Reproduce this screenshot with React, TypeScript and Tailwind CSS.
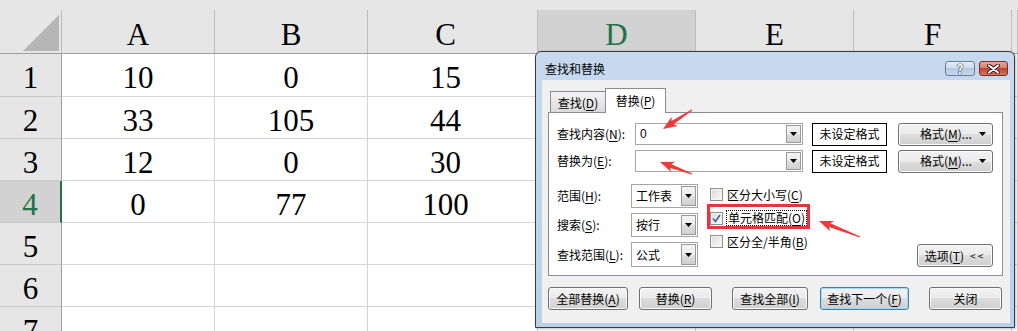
import React from "react"
import clsx from "clsx"

const colW = ["w-[153px]", "w-[153px]", "w-[170px]", "w-[158px]", "w-[158px]", "w-[158px]", "flex-1"]
const colPad = ["", "", "pr-[14px]", "", "", "", ""]
const letters = ["A", "B", "C", "D", "E", "F", ""]

const data = [
  ["10", "0", "15"],
  ["33", "105", "44"],
  ["12", "0", "30"],
  ["0", "77", "100"],
  [],
  [],
  [],
]

const cjk = "font-['Noto_Sans_CJK_SC',sans-serif]"

function Tri() {
  return (
    <svg width="7" height="4" viewBox="0 0 7 4">
      <polygon points="0,0 7,0 3.5,4" fill="#000" />
    </svg>
  )
}

function DropBtn({ className = "" }: { className?: string }) {
  return (
    <div
      className={clsx(
        "flex w-[15px] items-center justify-center border border-[#9a9a9a] bg-[linear-gradient(#f4f4f4_0%,#ececec_50%,#dedede_50%,#d0d0d0_100%)]",
        className
      )}
    >
      <Tri />
    </div>
  )
}

function Btn({
  children,
  className = "",
  focus = false,
}: {
  children: React.ReactNode
  className?: string
  focus?: boolean
}) {
  return (
    <div
      className={clsx(
        "flex h-[23px] items-center justify-center rounded-[3px] border text-[12px] leading-none text-black bg-[linear-gradient(#f2f2f2_0%,#ebebeb_50%,#dddddd_50%,#cfcfcf_100%)]",
        focus
          ? "border-[#3c7fb1] shadow-[inset_0_0_0_1px_#9fdcf8]"
          : "border-[#707070] shadow-[inset_0_0_0_1px_#fbfbfb]",
        className
      )}
    >
      {children}
    </div>
  )
}

function Key({ k }: { k: string }) {
  return <span className="underline underline-offset-2">{k}</span>
}

function Check({ checked = false }: { checked?: boolean }) {
  return (
    <div className="flex h-[13px] w-[13px] items-center justify-center border border-[#8f8f8f] bg-linear-to-br from-[#dadada] to-[#fafafa] shadow-[inset_0_0_0_1px_#f4f4f4]">
      {checked && (
        <svg width="9" height="9" viewBox="0 0 9 9">
          <path d="M1 4.5 L3.5 7.5 L8 1" stroke="#4a5f97" strokeWidth="1.6" fill="none" />
        </svg>
      )}
    </div>
  )
}

function Select({ value, className = "" }: { value: string; className?: string }) {
  return (
    <div className={clsx("flex w-[67px] border border-[#a5a5a5] bg-white p-[1px]", className)}>
      <div className="flex flex-1 items-center pl-[3px] text-[12px]">{value}</div>
      <DropBtn />
    </div>
  )
}

function Arrow({ tail, tip }: { tail: [number, number]; tip: [number, number] }) {
  const dx = tip[0] - tail[0]
  const dy = tip[1] - tail[1]
  const len = Math.hypot(dx, dy)
  const ux = dx / len
  const uy = dy / len
  const nx = -uy
  const ny = ux
  const h = 14
  const w = 5.5
  const s = 2
  const bx = tip[0] - ux * h
  const by = tip[1] - uy * h
  const pts = [
    [tip[0], tip[1]],
    [bx + nx * w, by + ny * w],
    [bx + ux * 2.5 + nx * s, by + uy * 2.5 + ny * s],
    [tail[0] + nx * 0.6, tail[1] + ny * 0.6],
    [tail[0] - nx * 0.6, tail[1] - ny * 0.6],
    [bx + ux * 2.5 - nx * s, by + uy * 2.5 - ny * s],
    [bx - nx * w, by - ny * w],
  ]
  return <polygon points={pts.map((p) => p.join(",")).join(" ")} fill="#ef3a3a" />
}

function Sheet() {
  return (
    <div>
      <div className="h-[10px] bg-[#e6e6e6]" />
      {/* column headers */}
      <div className="flex h-[44px] border-b border-[#9e9e9e] bg-[#e6e6e6]">
        <div className="w-[62px] border-r border-[#bdbdbd]">
          <svg width="61" height="43">
            <polygon points="59,5 59,41 23,41" fill="#b6b6b6" />
          </svg>
        </div>
        {letters.map((l, i) => (
          <div
            key={i}
            className={clsx(
              "flex items-center justify-center border-r border-[#bdbdbd] pt-[6px] text-[31px] leading-none",
              colW[i],
              colPad[i],
              l === "D" ? "bg-[#d2d2d2] text-[#217346]" : "text-black"
            )}
          >
            {l}
          </div>
        ))}
      </div>
      {/* rows */}
      {data.map((row, r) => (
        <div key={r} className={clsx("flex", r === 0 ? "h-[43px]" : "h-[42px]")}>
          <div
            className={clsx(
              "flex w-[62px] items-center justify-center border-b border-b-[#c8c8c8] pt-[5px] text-[31px] leading-none",
              r === 3
                ? "border-r-2 border-r-[#217346] bg-[#d2d2d2] text-[#217346]"
                : "border-r border-r-[#9e9e9e] bg-[#e6e6e6] text-black"
            )}
          >
            {r + 1}
          </div>
          {colW.map((w, c) => (
            <div
              key={c}
              className={clsx(
                "flex items-center justify-center border-r border-b border-[#d4d4d4] pt-[5px] text-[31px] leading-none text-black",
                w,
                colPad[c]
              )}
            >
              {row[c] ?? ""}
            </div>
          ))}
        </div>
      ))}
    </div>
  )
}

function Dialog() {
  return (
    <div
      className={clsx(
        "absolute left-[535px] top-[51px] flex h-[277px] w-[480px] flex-col rounded-t-[6px] border border-[#3b3b3b] bg-linear-to-b from-[#c6d9ef] to-[#b9d1ea] text-[12px] text-black shadow-[1px_1px_3px_rgba(0,0,0,0.25)]",
        cjk
      )}
    >
      {/* title bar */}
      <div className="flex h-[28px] items-end pb-[4px] pl-[9px] pr-[6px]">
        <div className="flex-1 leading-[15px]">查找和替换</div>
        <div className="flex h-[15px] w-[30px] items-center justify-center rounded-[3px] border border-[#6b7c95] bg-[linear-gradient(#e3ecf7_0%,#cfdcec_50%,#b3c8e2_50%,#c7d8ee_100%)] text-[13px] font-bold leading-none text-white [text-shadow:0_0_1px_#1f2d44,0_0_1px_#1f2d44,0_0_1px_#1f2d44]">
          ?
        </div>
        <div className="ml-[4px] flex h-[15px] w-[29px] items-center justify-center rounded-[3px] border border-[#7a2c22] bg-[linear-gradient(#e8a99b_0%,#d47a68_50%,#c2462f_50%,#d8765c_100%)]">
          <svg width="13" height="10" viewBox="0 0 13 10">
            <path d="M2 1.5 L11 8.5 M11 1.5 L2 8.5" stroke="#3b1510" strokeWidth="4" strokeLinecap="round" />
            <path d="M2 1.5 L11 8.5 M11 1.5 L2 8.5" stroke="#fff" strokeWidth="2.2" strokeLinecap="round" />
          </svg>
        </div>
      </div>

      {/* client area */}
      <div className="mb-[4px] ml-[6px] mr-[4px] flex flex-1 flex-col bg-[#f0f0f0] pl-[6px] pr-[7px] pt-[8px]">
        {/* tabs */}
        <div className="relative z-10 flex h-[24px] items-end pl-[2px]">
          <div className="mb-[-1px] flex h-[22px] w-[56px] items-center justify-center border border-[#898c95] bg-linear-to-b from-[#f3f3f3] to-[#dbdbdb] pt-[1px]">
            查找(<Key k="D" />)
          </div>
          <div className="mb-[-1px] -ml-px flex h-[25px] w-[61px] items-center justify-center border border-b-0 border-[#898c95] bg-white pb-[1px]">
            替换(<Key k="P" />)
          </div>
        </div>

        {/* tab panel */}
        <div className="flex h-[164px] flex-col border border-[#898c95] bg-white pl-[8px] pr-[9px] pt-[10px]">
          {[
            { label: ["查找内容(", "N", "):"], value: "0" },
            { label: ["替换为(", "E", "):"], value: "" },
          ].map((f, i) => (
            <div key={i} className={clsx("flex h-[22px] items-center", i === 1 && "mt-[5px]")}>
              <div className="w-[78px]">
                {f.label[0]}
                <Key k={f.label[1]} />
                {f.label[2]}
              </div>
              <div className="flex h-[22px] w-[168px] border border-[#a5a5a5] bg-white p-[1px]">
                <div className="flex flex-1 items-center pl-[3px] font-['Liberation_Sans',sans-serif] text-[12px]">
                  {f.value}
                </div>
                <DropBtn />
              </div>
              <div className="ml-[9px] flex h-[23px] w-[75px] items-center justify-center border border-black bg-white">
                未设定格式
              </div>
              <Btn className="ml-[11px] w-[95px] justify-start">
                <span className="ml-[21px] flex-1">
                  格式(<Key k="M" />)...
                </span>
                <span className="mr-[6px]">
                  <Tri />
                </span>
              </Btn>
            </div>
          ))}

          {/* options block */}
          <div className="mt-[12px] flex">
            <div className="flex flex-col gap-[5px]">
              {[
                ["范围(", "H", "):", "工作表", "h-[24px]"],
                ["搜索(", "S", "):", "按行", "h-[24px]"],
                ["查找范围(", "L", "):", "公式", "h-[25px]"],
              ].map((r, i) => (
                <div key={i} className="flex items-center">
                  <div className="w-[74px]">
                    {r[0]}
                    <Key k={r[1]} />
                    {r[2]}
                  </div>
                  <Select value={r[3]} className={r[4]} />
                </div>
              ))}
            </div>
            <div className="ml-[12px] mt-[-1px] flex flex-col">
              <div className="flex h-[23px] items-center gap-[4px]">
                <Check />
                <span>
                  区分大小写(<Key k="C" />)
                </span>
              </div>
              <div className="flex h-[24px] items-center gap-[3px]">
                <Check checked />
                <span className="border border-dotted border-black px-[1px] leading-[14px]">
                  单元格匹配(<Key k="O" />)
                </span>
              </div>
              <div className="flex h-[23px] items-center gap-[4px]">
                <Check />
                <span>
                  区分全/半角(<Key k="B" />)
                </span>
              </div>
            </div>
            <div className="flex flex-1 items-end justify-end">
              <Btn className="w-[76px] gap-[6px]">
                <span>
                  选项(<Key k="T" />)
                </span>
                <span className="text-[10px] tracking-[2px]">&lt;&lt;</span>
              </Btn>
            </div>
          </div>
        </div>

        {/* bottom buttons */}
        <div className="mt-[11px] flex">
          <Btn className="w-[80px]">
            全部替换(<Key k="A" />)
          </Btn>
          <Btn className="ml-[11px] w-[73px]">
            替换(<Key k="R" />)
          </Btn>
          <Btn className="ml-[20px] w-[76px]">
            查找全部(<Key k="I" />)
          </Btn>
          <Btn focus className="ml-[12px] w-[89px]">
            查找下一个(<Key k="F" />)
          </Btn>
          <Btn className="ml-[20px] w-[73px]">关闭</Btn>
        </div>
      </div>
    </div>
  )
}

export default function App() {
  return (
    <div className="relative h-[331px] w-[1018px] overflow-hidden bg-white font-['Liberation_Serif',serif]">
      <Sheet />
      <Dialog />
      {/* annotations */}
      <div className="pointer-events-none absolute left-[707px] top-[204px] h-[25px] w-[103px] border-[3px] border-[#e8353a]" />
      <svg className="pointer-events-none absolute left-0 top-0" width="1018" height="331">
        <Arrow tail={[692, 110]} tip={[663, 129]} />
        <Arrow tail={[692, 174]} tip={[660, 162]} />
        <Arrow tail={[860, 237]} tip={[819, 221]} />
      </svg>
    </div>
  )
}
